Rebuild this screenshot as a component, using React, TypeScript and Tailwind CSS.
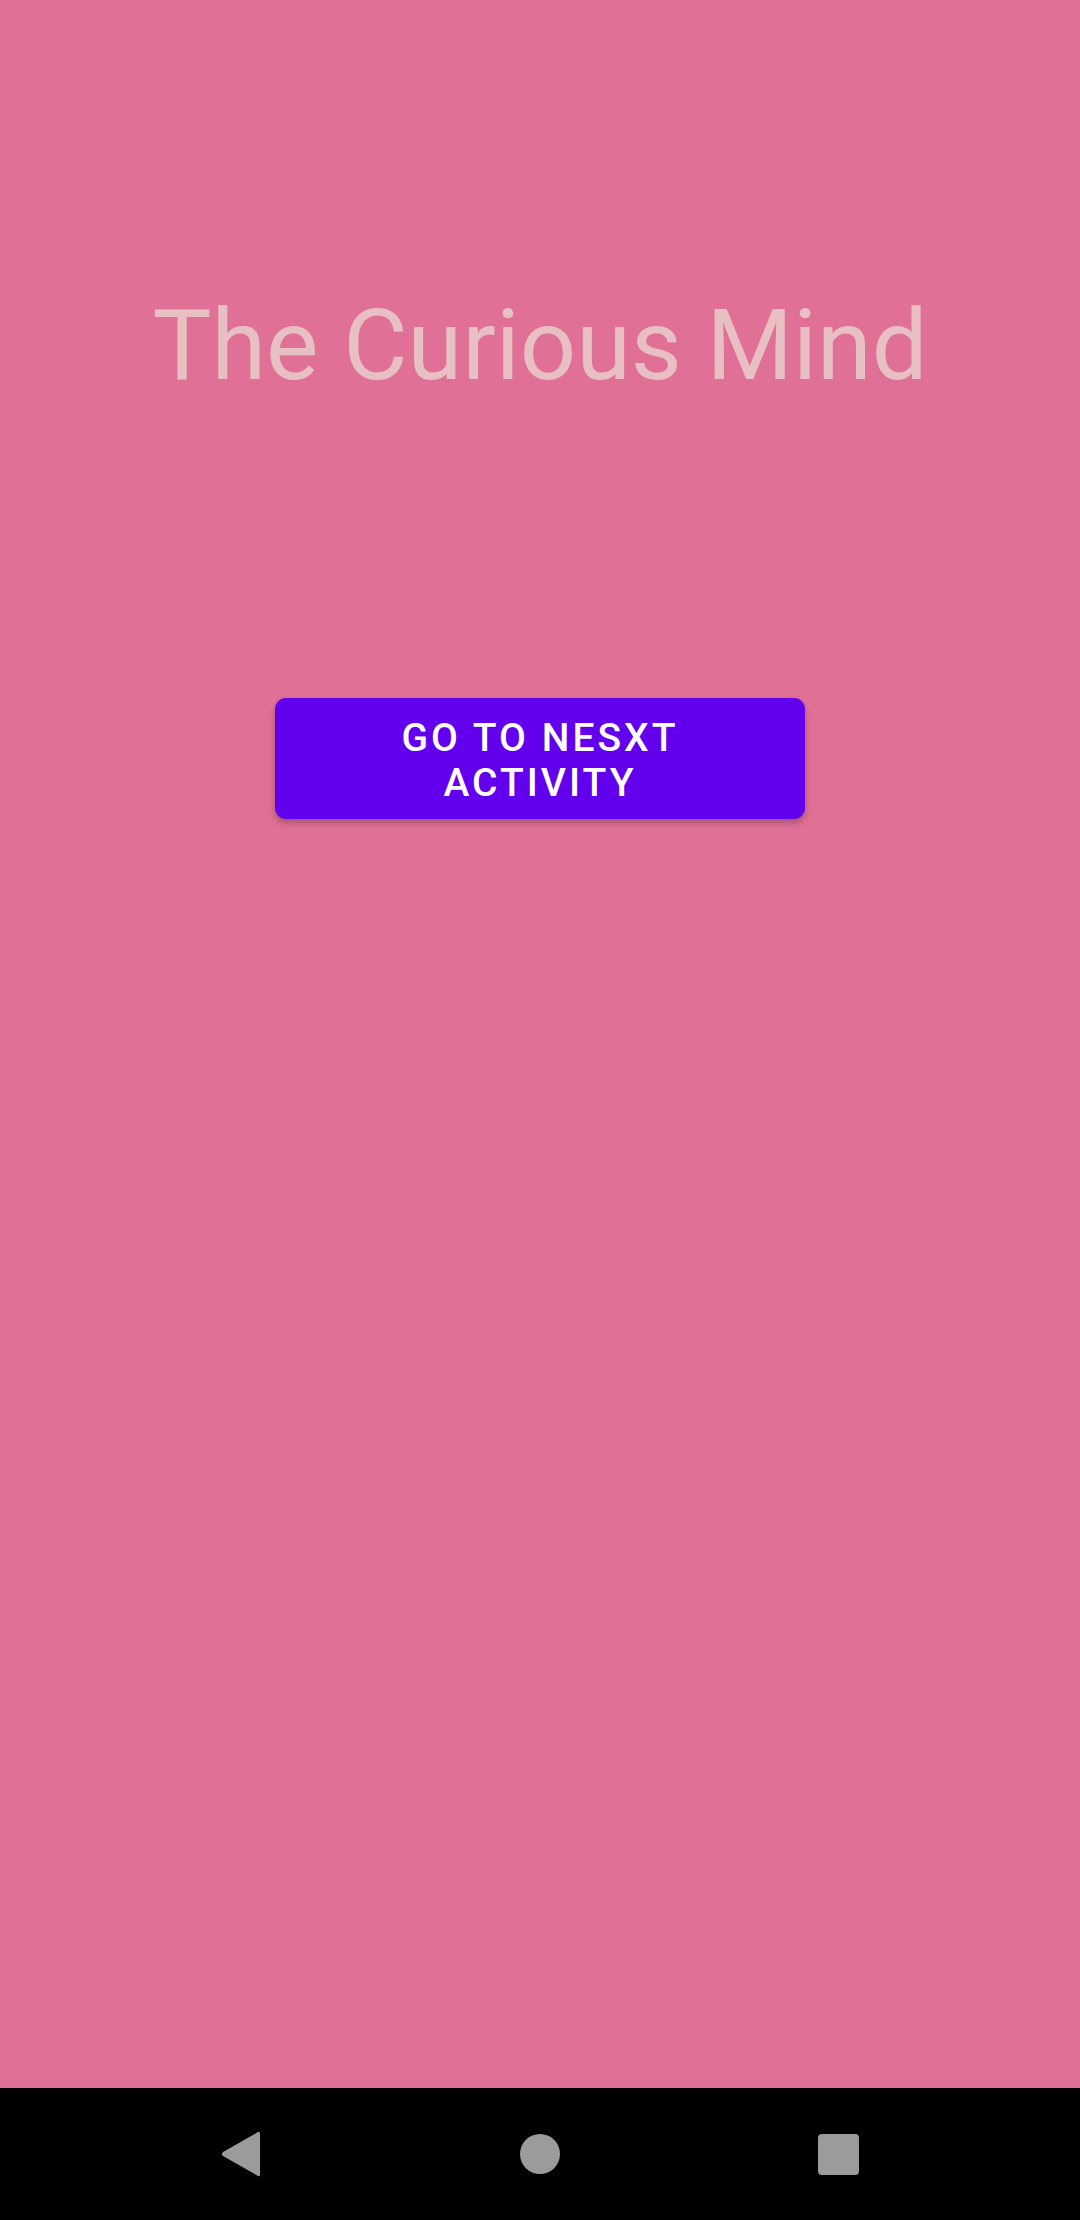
export default function App() {
  return (
    <div className="w-[1080px] h-[2220px] flex flex-col bg-[#e07096]" style={{ fontFamily: "Roboto, sans-serif" }}>
      <div className="flex-1 flex flex-col items-center">
        <h1 className="mt-[283px] text-[99px] leading-[124px] text-[#e8c0c4] font-normal">The Curious Mind</h1>
        <button className="mt-[291px] w-[530px] h-[121px] px-[42px] pt-[5px] rounded-[11px] bg-[#6200ee] text-white text-[39px] leading-[45px] font-medium tracking-[0.078em] uppercase shadow-[0_4px_6px_rgba(0,0,0,0.25)]">
          Go to nesxt activity
        </button>
      </div>
      <div className="h-[132px] bg-black flex items-center justify-center">
        <div className="w-[638px] flex items-center justify-between">
          <svg width="40" height="46" viewBox="0 0 40 46">
            <path d="M37 1 Q39 0 39 3 V43 Q39 46 37 45 L2 25 Q0 23 2 21 Z" fill="#9b9b9b" />
          </svg>
          <div className="w-[40px] h-[40px] rounded-full bg-[#9b9b9b]" />
          <div className="w-[41px] h-[41px] rounded-[4px] bg-[#9b9b9b]" />
        </div>
      </div>
    </div>
  );
}
